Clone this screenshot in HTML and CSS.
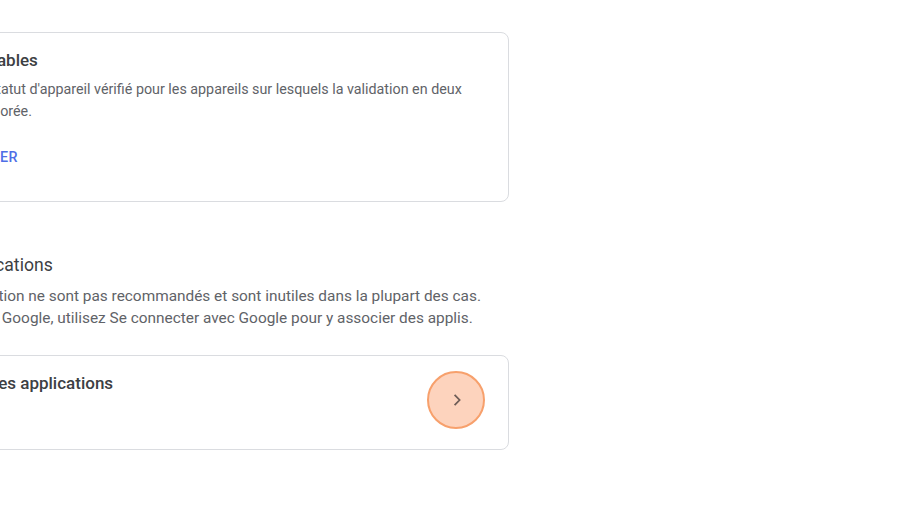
FILE: index.html
```html
<!DOCTYPE html>
<html lang="fr">
<head>
<meta charset="utf-8">
<link rel="stylesheet" href="styles.css">
</head>
<body>
<main class="page">
  <section class="card card-devices">
    <h2 class="card-title">Appareils fiables</h2>
    <p class="card-text">Révoquer le statut d'appareil vérifié pour les appareils sur lesquels la validation en deux étapes est ignorée.</p>
    <button class="text-btn">TOUT RÉVOQUER</button>
  </section>

  <section class="group">
    <h2 class="group-title">Mots de passe des applications</h2>
    <p class="group-text">Les mots de passe d'application ne sont pas recommandés et sont inutiles dans la plupart des cas. Pour sécuriser votre compte Google, utilisez Se connecter avec Google pour y associer des applis.</p>
    <div class="card card-row">
      <div class="row-info">
        <h3 class="card-title">Mots de passe des applications</h3>
        <p class="row-sub">Aucun</p>
      </div>
      <button class="chevron-btn" aria-label="Ouvrir">
        <svg viewBox="0 0 24 24" width="24" height="24"><path d="M10.6 6.8l5 5.2-5 5.2" fill="none" stroke="#6e5d57" stroke-width="1.8"/></svg>
      </button>
    </div>
  </section>
</main>
</body>
</html>
```
FILE: styles.css
```css
html, body {
  margin: 0;
  background: #ffffff;
}
body {
  font-family: Roboto, "Noto Sans", "Liberation Sans", sans-serif;
  color: #202124;
  overflow: hidden;
}
.page {
  margin-left: -195px;
  width: 704px;
  padding-top: 32px;
}
.card {
  border: 1px solid #dadce0;
  border-radius: 8px;
  background: #fff;
}
.card-devices {
  margin-left: 81px;
  padding: 15px 24px 26px;
}
.card-title {
  margin: 0;
  font-size: 17px;
  line-height: 24px;
  font-weight: 500;
  color: #3c4043;
}
.card-text {
  margin: 6px 0 0;
  font-size: 14.3px;
  line-height: 22px;
  color: #5f6368;
}
.text-btn {
  margin: 17px 0 0 -16px;
  height: 36px;
  padding: 0 8px;
  border: 0;
  background: none;
  font-family: inherit;
  font-size: 14.3px;
  font-weight: 500;
  letter-spacing: 0.2px;
  color: #4e6ee6;
}
.group {
  margin-top: 51px;
}
.group-title {
  margin: 0;
  font-size: 17.6px;
  line-height: 24px;
  font-weight: 400;
  color: #3c4043;
}
.group-text {
  margin: 8px 0 0;
  font-size: 15.4px;
  line-height: 22px;
  color: #5f6368;
}
.card-row {
  margin: 26px 0 0 43px;
  height: 95px;
  box-sizing: border-box;
  padding: 15px 23px 0 24px;
  display: flex;
  justify-content: space-between;
  align-items: flex-start;
}
.row-sub {
  margin: 2px 0 0;
  font-size: 14.3px;
  line-height: 22px;
  color: #5f6368;
}
.chevron-btn {
  width: 58px;
  height: 58px;
  box-sizing: border-box;
  border-radius: 50%;
  border: 2px solid #f7a06c;
  background: #fdd3bd;
  display: flex;
  align-items: center;
  justify-content: center;
  padding: 0;
}
```
